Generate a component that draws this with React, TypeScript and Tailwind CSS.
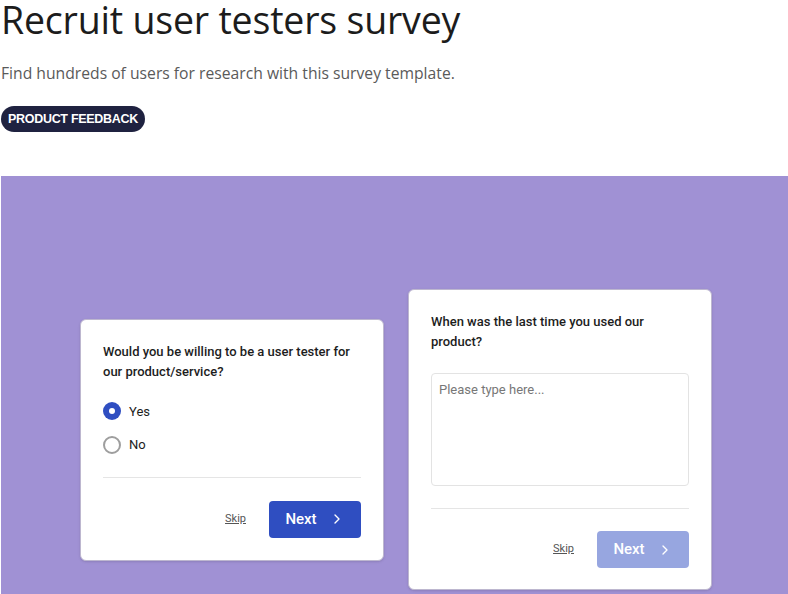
import { ChevronRight } from 'lucide-react';

function NextButton({ disabled }: { disabled?: boolean }) {
  return (
    <button
      className={`flex items-center justify-center gap-3 w-[92px] h-[37px] rounded-[4px] text-white text-[15px] font-medium ${disabled ? 'bg-[#97a6e0]' : 'bg-[#2f4ec1]'}`}
    >
      Next <ChevronRight className="w-4 h-4" strokeWidth={2} />
    </button>
  );
}

function CardFooter({ disabled }: { disabled?: boolean }) {
  return (
    <div className="flex items-center justify-end gap-[23px] pt-[22px]">
      <span className="text-[11px] text-[#555] underline">Skip</span>
      <NextButton disabled={disabled} />
    </div>
  );
}

export default function App() {
  return (
    <div className="w-[788px] h-[594px] overflow-hidden bg-white" style={{ fontFamily: 'Roboto, sans-serif' }}>
      <div className="pl-[1px]">
        <h1 className="text-[37.5px] leading-[40px] text-[#1c1c1c] tracking-[-0.2px]" style={{ fontFamily: '"Open Sans", sans-serif' }}>
          Recruit user testers survey
        </h1>
        <p className="mt-[23px] text-[15.7px] text-[#5a5a5a] leading-[20px]" style={{ fontFamily: '"Open Sans", sans-serif' }}>
          Find hundreds of users for research with this survey template.
        </p>
        <span
          className="inline-flex items-center mt-[23px] h-[26px] px-[7px] rounded-full bg-[#1f2240] text-white text-[12.5px] font-bold tracking-[-0.3px]"
          style={{ fontFamily: '"Liberation Sans", Arial, sans-serif' }}
        >
          PRODUCT FEEDBACK
        </span>
      </div>

      <div className="mt-[44px] ml-[1px] h-[528px] bg-[#a091d4] flex justify-center items-center gap-[24px] pl-[3px] pb-[1px]">
        <div className="w-[304px] bg-white rounded-[6px] border border-[#bdb7cf] shadow-sm px-[22px] pt-[22px] pb-[22px]">
          <p className="text-[13px] leading-[20px] text-[#1d1d1d] font-medium">
            Would you be willing to be a user tester for our product/service?
          </p>
          <div className="mt-[20px] flex flex-col gap-[14px]">
            <label className="flex items-center gap-[8px] text-[13px] text-[#1d1d1d]">
              <span className="w-[18px] h-[18px] rounded-full bg-[#2f4ec1] flex items-center justify-center">
                <span className="w-[6px] h-[6px] rounded-full bg-white" />
              </span>
              Yes
            </label>
            <label className="flex items-center gap-[8px] text-[13px] text-[#1d1d1d]">
              <span className="w-[18px] h-[18px] rounded-full border-2 border-[#9e9e9e]" />
              No
            </label>
          </div>
          <div className="mt-[22px] border-t border-[#e5e5e5]" />
          <div className="pt-[1px]">
            <CardFooter />
          </div>
        </div>

        <div className="w-[304px] bg-white rounded-[6px] border border-[#bdb7cf] shadow-sm px-[22px] pt-[22px] pb-[21px]">
          <p className="text-[13px] leading-[20px] text-[#1d1d1d] font-medium">
            When was the last time you used our product?
          </p>
          <textarea
            placeholder="Please type here..."
            className="mt-[21px] block w-full h-[113px] resize-none rounded-[4px] border border-[#e3e3e3] px-[7px] py-[6px] text-[13px] placeholder:text-[#777] outline-none"
          />
          <div className="mt-[22px] border-t border-[#e5e5e5]" />
          <CardFooter disabled />
        </div>
      </div>
    </div>
  );
}
